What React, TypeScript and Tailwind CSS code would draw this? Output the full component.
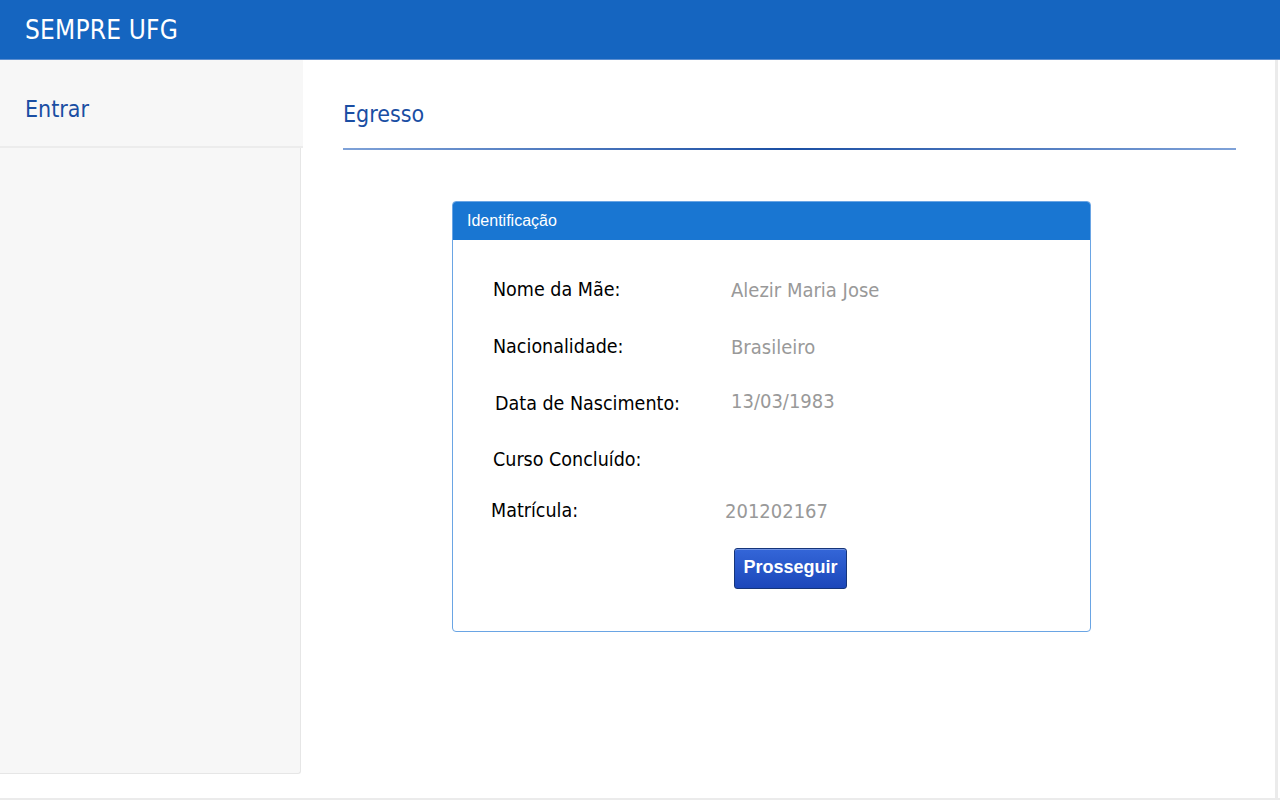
import React from "react";

const rows = [
  { label: "Nome da Mãe:", value: "Alezir Maria Jose", h: "h-[58px]", lx: "pl-[40px]", vm: "" },
  { label: "Nacionalidade:", value: "Brasileiro", h: "h-[56px]", lx: "pl-[40px]", vm: "" },
  { label: "Data de Nascimento:", value: "13/03/1983", h: "h-[58px]", lx: "pl-[42px]", vm: "-mt-[6px]" },
  { label: "Curso Concluído:", value: "", h: "h-[54px]", lx: "pl-[40px]", vm: "" },
  { label: "Matrícula:", value: "201202167", h: "h-[48px]", lx: "pl-[38px]", vm: "-ml-[6px]" },
];

export default function App() {
  const font = { fontFamily: '"DejaVu Sans Condensed", "DejaVu Sans", sans-serif' };
  return (
    <div className="w-[1280px] h-[800px] bg-white overflow-hidden flex flex-col" style={font}>
      <header className="h-[60px] bg-[#1565c0] flex items-center pl-[25px] shrink-0 border-b border-[#5d8fd0]">
        <span className="text-white text-[26px] leading-none tracking-[0.2px]">SEMPRE UFG</span>
      </header>
      <div className="flex h-[740px] border-b-2 border-[#ebebeb]">
        <aside className="w-[301px] h-[714px] bg-[#f7f7f7] border-r border-b border-[#e6e6e6] rounded-br-[3px] shrink-0">
          <div className="h-[88px] border-b-2 border-[#ececec] flex items-center pl-[25px] pt-[12px] w-[303px] bg-[#f7f7f7]">
            <span className="text-[#1a4ea3] text-[23px] leading-none">Entrar</span>
          </div>
        </aside>
        <main className="flex-1 border-r-[3px] border-[#ebebeb] mr-[2px] pl-[42px] pr-[39px] pt-[41px]">
          <div className="h-[47px] flex items-start pt-[2px]">
            <span className="text-[#1a4ea3] text-[23px] leading-none">Egresso</span>
          </div>
          <div className="h-[2px] bg-gradient-to-r from-[#7fa2d8] via-[#1a4ea3] to-[#7fa2d8]" />
          <div className="flex justify-center pt-[51px] pr-[36px]">
            <div className="w-[639px] h-[431px] border border-[#6aa5e4] rounded-[4px] overflow-hidden flex flex-col">
              <div className="h-[38px] bg-[#1976d2] flex items-center pl-[14px] shrink-0">
                <span className="text-white text-[16px] leading-none" style={{ fontFamily: '"Liberation Sans Narrow", "Liberation Sans", sans-serif' }}>Identificação</span>
              </div>
              <div className="flex flex-col pt-[21px]">
                {rows.map((r, i) => (
                  <div key={i} className={`flex items-center ${r.h}`}>
                    <span className={`w-[278px] ${r.lx} text-[19.5px] text-black leading-none shrink-0`}>{r.label}</span>
                    <span className={`text-[20px] text-[#999999] leading-none ${r.vm}`}>{r.value}</span>
                  </div>
                ))}
                <div className="flex pl-[281px] pt-[13px]">
                  <button className="w-[113px] h-[41px] rounded-[3px] border border-[#16357a] bg-gradient-to-b from-[#3466d8] to-[#1c47ba] text-white text-[18px] font-bold shadow-[inset_0_1px_0_rgba(255,255,255,0.3)] pb-[3px]" style={{ fontFamily: '"Liberation Sans", Arial, sans-serif' }}>
                    Prosseguir
                  </button>
                </div>
              </div>
            </div>
          </div>
        </main>
      </div>
    </div>
  );
}
